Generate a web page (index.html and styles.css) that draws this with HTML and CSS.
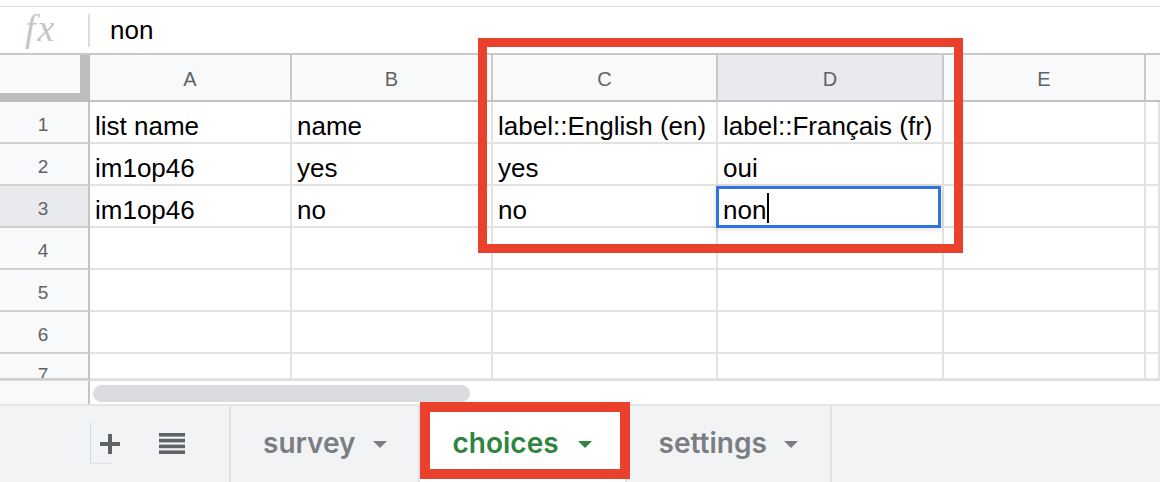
FILE: index.html
```html
<!DOCTYPE html>
<html>
<head>
<meta charset="utf-8">
<link rel="stylesheet" href="styles.css">
</head>
<body>
<div class="app">
  <div class="topgap"></div>
  <div class="fbar">
    <span class="fx">fx</span>
    <span class="fsep"></span>
    <span class="fval">non</span>
  </div>
  <div class="grid">
    <div class="corner"></div>
    <div class="ch">A</div>
    <div class="ch">B</div>
    <div class="ch">C</div>
    <div class="ch sel">D</div>
    <div class="ch">E</div>
    <div class="ch last"></div>

    <div class="rh">1</div>
    <div class="c">list name</div>
    <div class="c">name</div>
    <div class="c">label::English (en)</div>
    <div class="c">label::Français (fr)</div>
    <div class="c"></div>
    <div class="c"></div>

    <div class="rh">2</div>
    <div class="c">im1op46</div>
    <div class="c">yes</div>
    <div class="c">yes</div>
    <div class="c">oui</div>
    <div class="c"></div>
    <div class="c"></div>

    <div class="rh sel">3</div>
    <div class="c">im1op46</div>
    <div class="c">no</div>
    <div class="c">no</div>
    <div class="c active">non<span class="caret"></span></div>
    <div class="c"></div>
    <div class="c"></div>

    <div class="rh">4</div>
    <div class="c"></div><div class="c"></div><div class="c"></div><div class="c"></div><div class="c"></div><div class="c"></div>

    <div class="rh">5</div>
    <div class="c"></div><div class="c"></div><div class="c"></div><div class="c"></div><div class="c"></div><div class="c"></div>

    <div class="rh">6</div>
    <div class="c"></div><div class="c"></div><div class="c"></div><div class="c"></div><div class="c"></div><div class="c"></div>

    <div class="rh cut"><span>7</span></div>
    <div class="c"></div><div class="c"></div><div class="c"></div><div class="c"></div><div class="c"></div><div class="c"></div>
  </div>
  <div class="hscroll">
    <div class="hs-left"></div>
    <div class="track"><div class="thumb"></div></div>
  </div>
  <div class="tabs">
    <div class="tools">
      <span class="focus-mark"></span>
      <svg class="ico" width="22" height="22" viewBox="0 0 22 22"><path d="M11 1v20M1 11h20" stroke="#5f6368" stroke-width="4" fill="none"/></svg>
      <svg class="ico" width="26" height="22" viewBox="0 0 26 22"><g fill="#5f6368"><rect x="0" y="0" width="26" height="3.6"/><rect x="0" y="5.8" width="26" height="3.6"/><rect x="0" y="11.6" width="26" height="3.6"/><rect x="0" y="17.4" width="26" height="3.6"/></g></svg>
    </div>
    <div class="tab first"><span class="tname">survey</span><span class="tri"></span></div>
    <div class="tab active"><span class="tname">choices</span><span class="tri"></span></div>
    <div class="tab"><span class="tname">settings</span><span class="tri"></span></div>
    <div class="tabrest"></div>
  </div>
  <div class="mark mark-cols"></div>
  <div class="mark mark-tab"></div>
</div>
</body>
</html>
```
FILE: styles.css
```css
* { box-sizing: border-box; }
html, body { margin: 0; padding: 0; background: #fff; }
body { font-family: "Liberation Sans", Arial, sans-serif; }
.app {
  position: relative;
  width: 1160px;
  height: 482px;
  overflow: hidden;
}
.topgap { height: 6px; background: #fff; }
.fbar {
  height: 49px;
  border-top: 1px solid #e1e1e1;
  border-bottom: 2px solid #c9c9c9;
  display: flex;
  align-items: center;
}
.fx {
  width: 88px;
  padding-left: 25px;
  font-family: "Liberation Serif", "DejaVu Serif", serif;
  font-style: italic;
  font-size: 38px;
  color: #c4c6c8;
  line-height: 1;
  letter-spacing: 2px;
  margin-top: -4px;
}
.fsep {
  width: 2px;
  height: 33px;
  background: #dadce0;
}
.fval {
  margin-left: 20px;
  font-size: 26px;
  color: #000;
}
.grid {
  display: grid;
  grid-template-columns: 90px 202px 201px 225px 226px 202px 1fr;
  grid-template-rows: 47px repeat(6, 42px) 26px;
}
.corner {
  background: #f8f9fa;
  border-right: 10px solid #bdbdbd;
  border-bottom: 9px solid #bdbdbd;
}
.ch {
  background: #f8f9fa;
  border-right: 2px solid #c9c9c9;
  border-bottom: 2px solid #c2c2c2;
  display: flex;
  align-items: center;
  justify-content: center;
  font-size: 20px;
  color: #5f6368;
  padding-top: 4px;
}
.ch.sel { background: #e8eaed; }
.ch.last { border-right: none; }
.rh {
  background: #f8f9fa;
  border-right: 2px solid #c4c4c4;
  border-bottom: 2px solid #d0d0d0;
  display: flex;
  align-items: center;
  justify-content: center;
  font-size: 19px;
  color: #5f6368;
  padding: 5px 2px 0 0;
}
.rh.sel { background: #e8eaed; }
.rh.cut { align-items: flex-start; overflow: hidden; padding-top: 0; }
.rh.cut span { margin-top: 10px; }
.c {
  border-right: 2px solid #e2e2e2;
  border-bottom: 2px solid #e2e2e2;
  display: flex;
  align-items: flex-end;
  padding: 0 0 0 5px;
  font-size: 26px;
  color: #000;
  white-space: nowrap;
  overflow: visible;
}
.c.active { position: relative; }
.c.active::after {
  content: "";
  position: absolute;
  left: -2px;
  top: 0;
  right: 1px;
  bottom: -2px;
  border: 3px solid #2f73e0;
  box-shadow: 0 1px 6px rgba(0,0,0,0.15);
  z-index: 2;
}
.caret {
  display: inline-block;
  width: 2px;
  height: 30px;
  background: #000;
  margin-left: 1px;
  margin-bottom: 3px;
  position: relative;
  z-index: 3;
}
.hscroll {
  height: 24px;
  display: flex;
  border-top: 1px solid #dcdcdc;
}
.hs-left {
  width: 90px;
  background: #f8f9fa;
  border-right: 2px solid #c4c4c4;
}
.track {
  flex: 1;
  padding: 4px 0 0 3px;
}
.thumb {
  width: 377px;
  height: 17px;
  border-radius: 9px;
  background: #dadce0;
}
.tabs {
  height: 78px;
  background: #f1f3f4;
  border-top: 2px solid #e4e5e7;
  display: flex;
  align-items: stretch;
}
.tools {
  position: relative;
  width: 231px;
  border-right: 2px solid #e0e1e3;
  display: flex;
  align-items: center;
  padding-left: 99px;
  gap: 38px;
}
.focus-mark {
  position: absolute;
  left: 90px;
  top: 16px;
  width: 22px;
  height: 42px;
  border-left: 1px solid #c9dbf7;
  border-bottom: 1px solid #dfe2e8;
}
.ico { display: block; }
.tab {
  display: flex;
  align-items: center;
  gap: 17px;
  padding: 0 32px 0 32px;
  border-right: 2px solid #e0e1e3;
  font-family: Inter, "Liberation Sans", sans-serif;
  font-weight: 600;
  font-size: 28px;
  color: #7a7e83;
}
.tab.first { padding-right: 31px; }
.tname { margin-top: -2px; }
.tri {
  width: 0;
  height: 0;
  border-left: 7px solid transparent;
  border-right: 7px solid transparent;
  border-top: 7px solid #7a7e83;
}
.tab.active {
  background: #fff;
  color: #2e8540;
  padding: 0 33px 0 33px;
  gap: 19px;
}
.tab.active .tri { border-top-color: #2e8540; }
.tabrest { flex: 1; }
.mark {
  position: absolute;
  border-style: solid;
  border-color: #e9412b;
  pointer-events: none;
  z-index: 5;
}
.mark-cols {
  left: 478px;
  top: 38px;
  width: 485px;
  height: 215px;
  border-width: 9px;
}
.mark-tab {
  left: 420px;
  top: 402px;
  width: 210px;
  height: 77px;
  border-width: 10px;
}
```
